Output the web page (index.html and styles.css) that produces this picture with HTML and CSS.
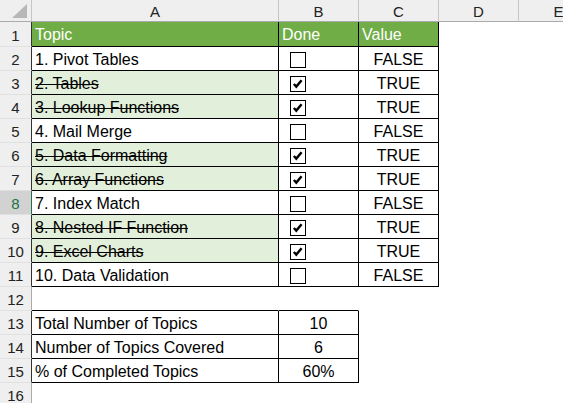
FILE: index.html
```html
<!DOCTYPE html>
<html>
<head>
<meta charset="utf-8">
<link rel="stylesheet" href="styles.css">
</head>
<body>
<div class="sheet">
  <div class="corner"><svg width="31" height="21" viewBox="0 0 31 21"><polygon points="12,18 27,18 27,4" fill="#b7b7b7"/></svg></div>
  <div class="ch">A</div><div class="ch">B</div><div class="ch">C</div><div class="ch">D</div><div class="ch">E</div>

  <div class="rh t">1</div>
  <div class="c b g">Topic</div><div class="c b g">Done</div><div class="c b g">Value</div><div class="c"></div><div class="c"></div>

  <div class="rh t">2</div>
  <div class="c b">1. Pivot Tables</div><div class="c b"><span class="box"></span></div><div class="c b ctr">FALSE</div><div class="c"></div><div class="c"></div>

  <div class="rh t">3</div>
  <div class="c b l s">2. Tables</div><div class="c b"><span class="box"><svg width="14" height="14" viewBox="0 0 14 14"><path d="M2.8 7 L5.3 9.6 L10.6 3.2" fill="none" stroke="#000" stroke-width="2.4"/></svg></span></div><div class="c b ctr">TRUE</div><div class="c"></div><div class="c"></div>

  <div class="rh t">4</div>
  <div class="c b l s">3. Lookup Functions</div><div class="c b"><span class="box"><svg width="14" height="14" viewBox="0 0 14 14"><path d="M2.8 7 L5.3 9.6 L10.6 3.2" fill="none" stroke="#000" stroke-width="2.4"/></svg></span></div><div class="c b ctr">TRUE</div><div class="c"></div><div class="c"></div>

  <div class="rh t">5</div>
  <div class="c b">4. Mail Merge</div><div class="c b"><span class="box"></span></div><div class="c b ctr">FALSE</div><div class="c"></div><div class="c"></div>

  <div class="rh t">6</div>
  <div class="c b l s">5. Data Formatting</div><div class="c b"><span class="box"><svg width="14" height="14" viewBox="0 0 14 14"><path d="M2.8 7 L5.3 9.6 L10.6 3.2" fill="none" stroke="#000" stroke-width="2.4"/></svg></span></div><div class="c b ctr">TRUE</div><div class="c"></div><div class="c"></div>

  <div class="rh t">7</div>
  <div class="c b l s">6. Array Functions</div><div class="c b"><span class="box"><svg width="14" height="14" viewBox="0 0 14 14"><path d="M2.8 7 L5.3 9.6 L10.6 3.2" fill="none" stroke="#000" stroke-width="2.4"/></svg></span></div><div class="c b ctr">TRUE</div><div class="c"></div><div class="c"></div>

  <div class="rh t sel">8</div>
  <div class="c b">7. Index Match</div><div class="c b"><span class="box"></span></div><div class="c b ctr">FALSE</div><div class="c"></div><div class="c"></div>

  <div class="rh t">9</div>
  <div class="c b l s">8. Nested IF Function</div><div class="c b"><span class="box"><svg width="14" height="14" viewBox="0 0 14 14"><path d="M2.8 7 L5.3 9.6 L10.6 3.2" fill="none" stroke="#000" stroke-width="2.4"/></svg></span></div><div class="c b ctr">TRUE</div><div class="c"></div><div class="c"></div>

  <div class="rh t">10</div>
  <div class="c b l s">9. Excel Charts</div><div class="c b"><span class="box"><svg width="14" height="14" viewBox="0 0 14 14"><path d="M2.8 7 L5.3 9.6 L10.6 3.2" fill="none" stroke="#000" stroke-width="2.4"/></svg></span></div><div class="c b ctr">TRUE</div><div class="c"></div><div class="c"></div>

  <div class="rh t">11</div>
  <div class="c b">10. Data Validation</div><div class="c b"><span class="box"></span></div><div class="c b ctr">FALSE</div><div class="c"></div><div class="c"></div>

  <div class="rh">12</div>
  <div class="c bb"></div><div class="c bb"></div><div class="c"></div><div class="c"></div><div class="c"></div>

  <div class="rh t">13</div>
  <div class="c b">Total Number of Topics</div><div class="c b ctr">10</div><div class="c"></div><div class="c"></div><div class="c"></div>

  <div class="rh t">14</div>
  <div class="c b">Number of Topics Covered</div><div class="c b ctr">6</div><div class="c"></div><div class="c"></div><div class="c"></div>

  <div class="rh t">15</div>
  <div class="c b">% of Completed Topics</div><div class="c b ctr">60%</div><div class="c"></div><div class="c"></div><div class="c"></div>

  <div class="rh">16</div>
  <div class="c"></div><div class="c"></div><div class="c"></div><div class="c"></div><div class="c"></div>
</div>
</body>
</html>
```

FILE: styles.css
```css
html, body {
  margin: 0;
  padding: 0;
  background: #fff;
  overflow: hidden;
}
.sheet {
  display: grid;
  grid-template-columns: 32px 247px 80px 80px 80px 80px;
  grid-template-rows: 22px 25px repeat(15, 24px);
  font-family: "Liberation Sans", Arial, sans-serif;
  font-size: 16px;
  color: #000;
  width: 563px;
  height: 403px;
  overflow: hidden;
}
.sheet > div {
  box-sizing: border-box;
  display: flex;
  align-items: center;
  white-space: nowrap;
  overflow: hidden;
}
.corner {
  background: #efefef;
  border-right: 1px solid #c6c6c6;
  border-bottom: 1px solid #ababab;
}
.corner svg { display: block; }
.ch {
  background: #efefef;
  border-right: 1px solid #c6c6c6;
  border-bottom: 1px solid #ababab;
  justify-content: center;
  font-size: 15px;
  color: #222;
  padding-top: 2px;
}
.rh {
  background: #efefef;
  border-right: 1px solid #ababab;
  border-bottom: 1px solid #e0e0e0;
  justify-content: center;
  font-size: 15px;
  color: #222;
  padding-top: 2px;
}
.rh.t {
  border-right-color: #333;
}
.rh.sel {
  background: #d2d2d2;
  color: #217346;
  border-right-color: #217346;
}
.c {
  border-right: 1px solid transparent;
  border-bottom: 1px solid transparent;
  padding-left: 3px;
  padding-top: 2px;
}
.c.b {
  border-right-color: #000;
  border-bottom-color: #000;
}
.c.bb {
  border-bottom-color: #000;
}
.c.g {
  background: #70ad47;
  color: #fff;
}
.c.l {
  background: #e2efda;
}
.c.s {
  text-decoration: line-through;
}
.c.ctr {
  justify-content: center;
  padding-left: 0;
}
.box {
  box-sizing: border-box;
  width: 16px;
  height: 16px;
  border: 1px solid #000;
  background: #fff;
  margin-left: 8px;
  margin-top: 1px;
  display: flex;
  align-items: center;
  justify-content: center;
}
.box svg { display: block; }
```
